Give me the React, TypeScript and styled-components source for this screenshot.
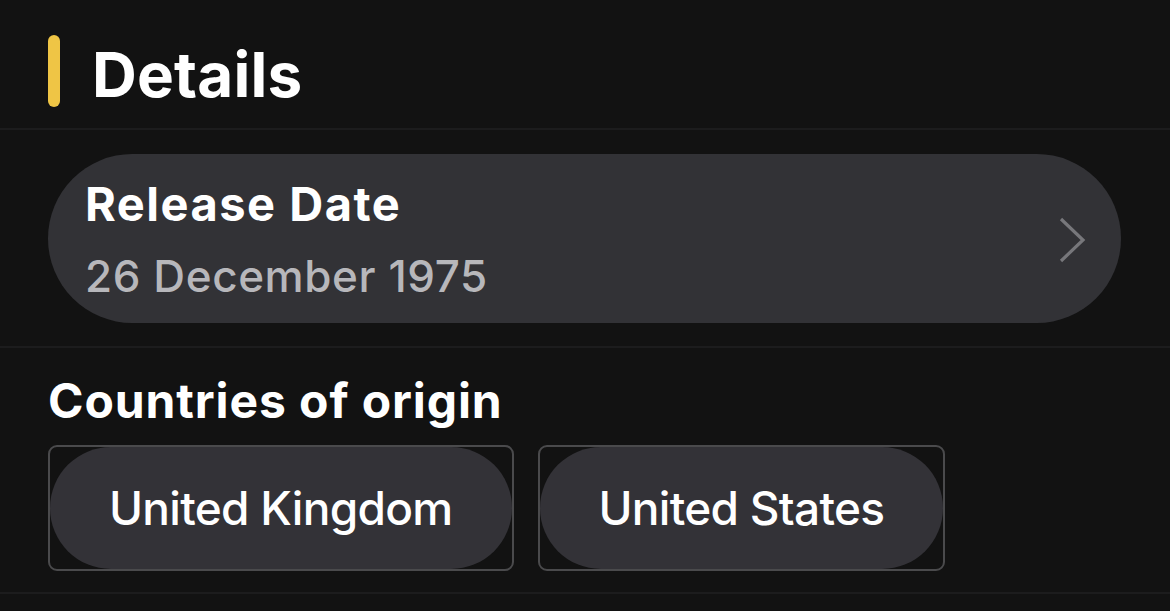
import React from "react";
import styled, { createGlobalStyle } from "styled-components";

const GlobalStyle = createGlobalStyle`
  html, body {
    margin: 0;
    padding: 0;
    background: #121212;
  }
  body {
    font-family: Inter, "Noto Sans", "Liberation Sans", sans-serif;
    color: #ffffff;
    -webkit-font-smoothing: antialiased;
  }
`;

const Page = styled.div`
  width: 1170px;
  min-height: 611px;
  background: #121212;
  display: flex;
  flex-direction: column;
`;

const Header = styled.header`
  height: 130px;
  box-sizing: border-box;
  padding: 35px 48px 0;
  display: flex;
  align-items: flex-start;
  gap: 32px;
  border-bottom: 2px solid #1c1c1d;
`;

const AccentBar = styled.span`
  width: 12px;
  height: 72px;
  border-radius: 6px;
  background: #efc545;
  flex-shrink: 0;
`;

const Title = styled.h1`
  margin: 4px 0 0;
  font-size: 62px;
  line-height: 72px;
  font-weight: 700;
  letter-spacing: 0.2px;
`;

const Section = styled.section<{ $pt: number; $pb: number }>`
  padding: ${(p) => p.$pt}px 49px ${(p) => p.$pb}px 48px;
  border-bottom: 2px solid #1c1c1d;
  display: flex;
  flex-direction: column;
`;

const Card = styled.div`
  height: 169px;
  box-sizing: border-box;
  border-radius: 85px;
  background: #323236;
  display: flex;
  align-items: center;
  padding: 0 34px 0 37px;
`;

const CardText = styled.div`
  flex: 1;
  display: flex;
  flex-direction: column;
  gap: 18px;
`;

const CardLabel = styled.div`
  font-size: 47px;
  line-height: 56px;
  font-weight: 700;
  letter-spacing: 1.5px;
  color: #ffffff;
`;

const CardValue = styled.div`
  font-size: 44px;
  line-height: 52px;
  font-weight: 500;
  letter-spacing: 0.6px;
  color: #b7b7bb;
`;

const Chevron = styled.svg`
  width: 30px;
  height: 48px;
  flex-shrink: 0;
  margin-top: 2px;
`;

const SectionTitle = styled.h2`
  margin: 0;
  font-size: 48px;
  line-height: 58px;
  font-weight: 700;
  letter-spacing: 0.9px;
`;

const ChipRow = styled.div`
  display: flex;
  gap: 24px;
  margin-top: 15px;
`;

const Chip = styled.button`
  height: 126px;
  box-sizing: border-box;
  padding: 0;
  border: 2px solid #4a4a4c;
  border-radius: 9px;
  background: #121212;
  display: flex;
  cursor: pointer;
`;

const ChipPill = styled.span`
  flex: 1;
  display: flex;
  align-items: center;
  justify-content: center;
  padding: 0 59px;
  border-radius: 61px;
  background: #333237;
  color: #ffffff;
  font-family: Inter, "Noto Sans", "Liberation Sans", sans-serif;
  font-size: 46px;
  font-weight: 500;
  line-height: 56px;
  letter-spacing: -0.7px;
`;

const countries = ["United Kingdom", "United States"];

export default function App() {
  return (
    <Page>
      <GlobalStyle />
      <Header>
        <AccentBar />
        <Title>Details</Title>
      </Header>
      <Section $pt={24} $pb={23}>
        <Card>
          <CardText>
            <CardLabel>Release Date</CardLabel>
            <CardValue>26 December 1975</CardValue>
          </CardText>
          <Chevron viewBox="0 0 30 48" fill="none">
            <polyline
              points="4,3 26,24 4,45"
              stroke="#77777b"
              strokeWidth="3.2"
              strokeLinecap="butt"
              strokeLinejoin="miter"
            />
          </Chevron>
        </Card>
      </Section>
      <Section $pt={24} $pb={21}>
        <SectionTitle>Countries of origin</SectionTitle>
        <ChipRow>
          {countries.map((c) => (
            <Chip key={c}>
              <ChipPill>{c}</ChipPill>
            </Chip>
          ))}
        </ChipRow>
      </Section>
    </Page>
  );
}
